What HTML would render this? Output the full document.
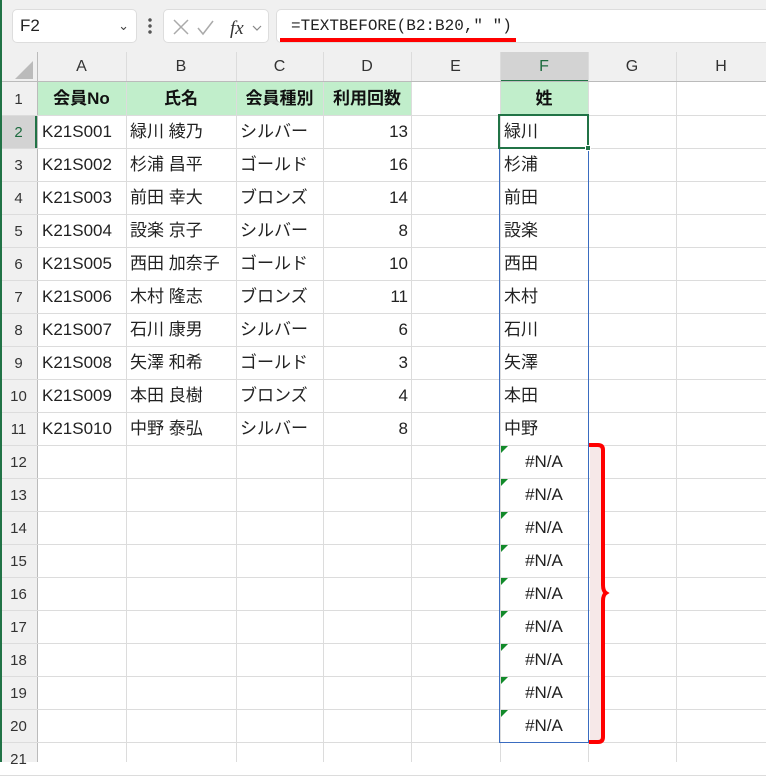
<!DOCTYPE html>
<html><head><meta charset="utf-8"><style>
body{margin:0;width:766px;height:762px;overflow:hidden;background:#fff;font-family:"Liberation Sans","Noto Sans CJK JP",sans-serif;position:relative}
.a{position:absolute;box-sizing:border-box}
.t{font-size:17px;line-height:33px;white-space:nowrap;color:#222}
</style></head><body>
<div class="a" style="left:0;top:0;width:766px;height:52px;background:#f0f0f0"></div>
<div class="a" style="left:12px;top:9px;width:125px;height:34px;background:#fff;border:1px solid #ddd;border-radius:5px;font-size:17px;line-height:32px;padding-left:7px;color:#222">F2<span style="position:absolute;right:7px;top:0;font-size:13px;color:#444">&#8964;</span></div>
<div class="a" style="left:148px;top:17px;width:4px;height:18px;background:radial-gradient(circle,#555 1.5px,transparent 2px) 0 0/4px 6px"></div>
<div class="a" style="left:163px;top:9px;width:106px;height:34px;background:#fff;border:1px solid #ddd;border-radius:5px">
<svg width="106" height="34" style="position:absolute;left:0;top:0"><path d="M10 10l14 14M24 10L10 24" stroke="#aaa" stroke-width="1.5" fill="none"/><path d="M34 18l5 6 10-13" stroke="#aaa" stroke-width="1.5" fill="none"/><text x="66" y="24" font-family="Liberation Serif" font-style="italic" font-size="19" fill="#333">fx</text><path d="M89 16l4 4 4-4" stroke="#888" stroke-width="1.2" fill="none"/></svg></div>
<div class="a" style="left:276px;top:9px;width:490px;height:34px;background:#fff;border:1px solid #ddd;border-right:none;border-radius:5px 0 0 5px;font-family:'Liberation Mono',monospace;font-size:16px;line-height:32px;padding-left:14px;color:#222">=TEXTBEFORE(B2:B20," ")</div>
<div class="a" style="left:280px;top:38px;width:236px;height:4px;background:#f00"></div>
<div id="g"></div>
<div class="a" style="left:0;top:0;width:2px;height:762px;background:#217346;z-index:5"></div>
<script>
var X=[0,37,126,236,323,411,500,588,676,766],L=['','A','B','C','D','E','F','G','H'];
var h='';
h+='<div class="a" style="left:0;top:52px;width:766px;height:30px;background:#f0f0f0"></div>';
h+='<div class="a" style="left:0;top:82px;width:37px;height:680px;background:#f0f0f0"></div>';
h+='<div class="a" style="left:500px;top:52px;width:88px;height:30px;background:#d3d3d3;border-bottom:2px solid #217346"></div>';
h+='<div class="a" style="left:0;top:115px;width:37px;height:33px;background:#d3d3d3;border-right:2px solid #217346"></div>';
h+='<div class="a" style="left:37px;top:82px;width:374px;height:33px;background:#c1eecb"></div>';
h+='<div class="a" style="left:500px;top:82px;width:88px;height:33px;background:#c1eecb"></div>';
for(var i=1;i<X.length;i++){h+='<div class="a" style="left:'+X[i]+'px;top:52px;width:1px;height:710px;background:'+(i==1?'#bbb':'#dcdcdc')+'"></div>';}
h+='<div class="a" style="left:0;top:81px;width:766px;height:1px;background:#bbb"></div>';
for(var r=1;r<=21;r++){var y=82+r*33;h+='<div class="a" style="left:0;top:'+y+'px;width:766px;height:1px;background:#dcdcdc"></div>';}
for(i=1;i<9;i++){h+='<div class="a" style="left:'+X[i]+'px;top:52px;width:'+(X[i+1]-X[i])+'px;height:30px;text-align:center;font-size:16px;line-height:30px;color:'+(i==6?'#1d6b3f':'#333')+'">'+L[i]+'</div>';}
h+='<svg class="a" style="left:14px;top:60px" width="20" height="20"><path d="M19 1V19H1z" fill="#bbb"/></svg>';
for(r=1;r<=21;r++){h+='<div class="a" style="left:0;top:'+(82+(r-1)*33)+'px;width:37px;height:33px;text-align:center;font-size:15px;line-height:36px;color:'+(r==2?'#1d6b3f':'#333')+'">'+r+'</div>';}
var D=[['K21S001','緑川 綾乃','シルバー',13,'緑川'],['K21S002','杉浦 昌平','ゴールド',16,'杉浦'],['K21S003','前田 幸大','ブロンズ',14,'前田'],['K21S004','設楽 京子','シルバー',8,'設楽'],['K21S005','西田 加奈子','ゴールド',10,'西田'],['K21S006','木村 隆志','ブロンズ',11,'木村'],['K21S007','石川 康男','シルバー',6,'石川'],['K21S008','矢澤 和希','ゴールド',3,'矢澤'],['K21S009','本田 良樹','ブロンズ',4,'本田'],['K21S010','中野 泰弘','シルバー',8,'中野']];
var H=['会員No','氏名','会員種別','利用回数'];
for(i=0;i<4;i++)h+='<div class="a t" style="left:'+X[i+1]+'px;top:82px;width:'+(X[i+2]-X[i+1])+'px;text-align:center;font-weight:bold;color:#111">'+H[i]+'</div>';
h+='<div class="a t" style="left:500px;top:82px;width:88px;text-align:center;font-weight:bold;color:#111">姓</div>';
for(r=0;r<10;r++){var y=115+r*33;
h+='<div class="a t" style="left:42px;top:'+y+'px">'+D[r][0]+'</div>';
h+='<div class="a t" style="left:130px;top:'+y+'px">'+D[r][1]+'</div>';
h+='<div class="a t" style="left:240px;top:'+y+'px">'+D[r][2]+'</div>';
h+='<div class="a t" style="left:323px;top:'+y+'px;width:85px;text-align:right">'+D[r][3]+'</div>';
h+='<div class="a t" style="left:504px;top:'+y+'px">'+D[r][4]+'</div>';}
for(r=0;r<9;r++){var y=445+r*33;
h+='<svg class="a" style="left:501px;top:'+(y+1)+'px" width="7" height="7"><path d="M0 0H7L0 7z" fill="#128a2a"/></svg>';
h+='<div class="a t" style="left:500px;top:'+y+'px;width:88px;text-align:center">#N/A</div>';}
h+='<div class="a" style="left:499px;top:115px;width:90px;height:628px;border:1px solid #3a6cc0"></div>';
h+='<div class="a" style="left:498px;top:114px;width:91px;height:35px;border:2px solid #217346"></div>';
h+='<div class="a" style="left:585px;top:145px;width:6px;height:6px;background:#217346;border:1px solid #fff"></div>';
h+='<div class="a" style="left:590px;top:446px;width:14px;height:295px;background:#f6e8e8"></div>';
h+='<svg class="a" style="left:586px;top:440px" width="30" height="310"><path d="M3 5H12Q17 5 17 10V145Q17 151 20 153Q17 155 17 161V297Q17 302 12 302H3" stroke="#f00" stroke-width="4" fill="none"/></svg>';
document.getElementById('g').innerHTML=h;
</script>
</body></html>
